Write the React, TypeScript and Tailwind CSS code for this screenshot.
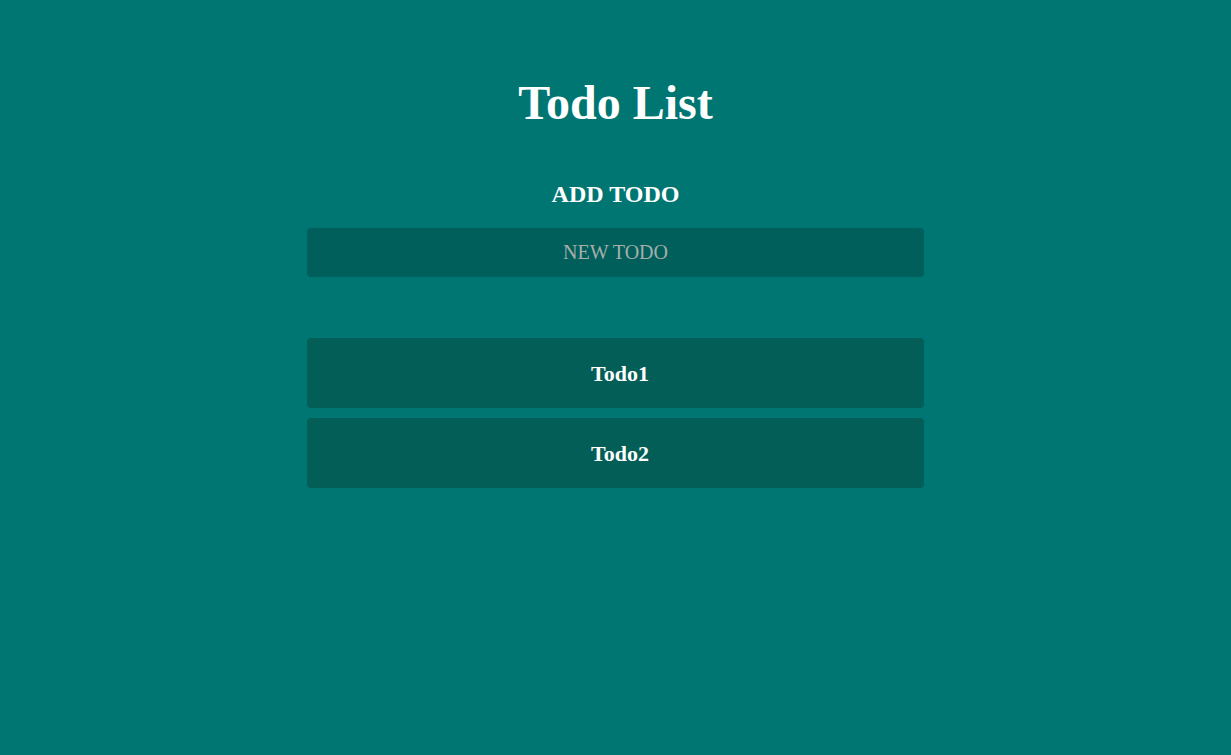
import { useState } from "react";

const TODOS = ["Todo1", "Todo2"];

export default function App() {
  const [text, setText] = useState("");

  return (
    <div className="min-h-[755px] w-full bg-[#007673] font-['Liberation_Serif',serif] text-white">
      <div className="mx-auto flex w-[617px] flex-col items-center pt-[79px]">
        <h1 className="text-[48px] font-bold leading-none">Todo List</h1>

        {/* Add form */}
        <h2 className="mt-[55px] text-[24px] font-bold leading-none">ADD TODO</h2>
        <input
          type="text"
          value={text}
          onChange={(e) => setText(e.target.value)}
          placeholder="NEW TODO"
          className="mt-[22px] h-[49px] w-full rounded bg-[#005e5b] text-center text-[20px] text-white outline-none placeholder:text-[#a6aeac]"
        />

        {/* List */}
        <ul className="mt-[61px] flex w-full flex-col gap-[10px]">
          {TODOS.map((t) => (
            <li
              key={t}
              className="flex h-[70px] items-center justify-center rounded bg-[#025e56] pl-[9px] text-[22px] font-bold"
            >
              {t}
            </li>
          ))}
        </ul>
      </div>
    </div>
  );
}
